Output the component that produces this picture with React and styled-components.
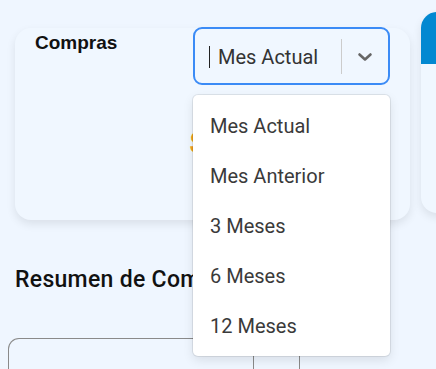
import React from 'react'
import styled, { createGlobalStyle } from 'styled-components'

const GlobalStyle = createGlobalStyle`
  html, body {
    margin:0;
    padding:0;
    overflow:hidden;
    background:#eff6ff;
    font-family:Roboto, "Liberation Sans", sans-serif;
  }
`

const options = ['Mes Actual', 'Mes Anterior', '3 Meses', '6 Meses', '12 Meses']

const ChevronDown = () => (
  <svg width="16" height="10" viewBox="0 0 16 10" fill="none">
    <polyline points="2.5,2.5 8,7.5 13.5,2.5" stroke="#666" strokeWidth="2.6" strokeLinecap="round" strokeLinejoin="round" />
  </svg>
)

const App = () => {
  return (
    <Page>
      <GlobalStyle />
      <CardRow>
        <StatCard>
          <CardHeader>
            <CardTitle>Compras</CardTitle>
            <SelectWrap>
              <SelectControl>
                <Caret />
                <SelectValue>Mes Actual</SelectValue>
                <Separator />
                <Indicator><ChevronDown /></Indicator>
              </SelectControl>
              <Menu>
                {options.map(o => <Option key={o}>{o}</Option>)}
              </Menu>
            </SelectWrap>
          </CardHeader>
          <Amount>$0.00</Amount>
        </StatCard>
        <SideCard>
          <CardBand />
        </SideCard>
      </CardRow>
      <SectionTitle>Resumen de Compras</SectionTitle>
      <TableBox>
        <Cell />
        <Cell narrow />
      </TableBox>
    </Page>
  )
}

const Page = styled.div`
  height:369px;
  padding-left:15px;
  box-sizing:border-box;
  overflow:hidden;
`

const CardRow = styled.div`
  display:flex;
  align-items:flex-start;
  gap:11px;
`

const StatCard = styled.div`
  flex:none;
  width:395px;
  height:192px;
  margin-top:28px;
  padding:0 20px;
  box-sizing:border-box;
  background:#f0f7ff;
  border-radius:16px;
  box-shadow:0 4px 10px rgba(0,0,0,0.09);
`

const SideCard = styled.div`
  flex:none;
  width:200px;
  height:201px;
  margin-top:12px;
  background:#f0f7ff;
  border-radius:16px;
  overflow:hidden;
  box-shadow:0 4px 10px rgba(0,0,0,0.09);
`

const CardBand = styled.div`
  height:52px;
  background:#0288d1;
`

const CardHeader = styled.div`
  display:flex;
  justify-content:space-between;
  align-items:flex-start;
`

const CardTitle = styled.div`
  margin-top:4px;
  font-family:"Liberation Sans", Arial, sans-serif;
  font-weight:700;
  font-size:19px;
  line-height:22px;
  color:#111;
`

const SelectWrap = styled.div`
  position:relative;
  margin-top:-1px;
  width:197px;
`

const SelectControl = styled.div`
  display:flex;
  align-items:center;
  height:58px;
  box-sizing:border-box;
  border:2px solid #3b8bf6;
  border-radius:9px;
  background:#f0f7ff;
  padding-left:14px;
`

const Caret = styled.span`
  width:1px;
  height:22px;
  background:#222;
  margin-right:8px;
  margin-top:1px;
`

const SelectValue = styled.span`
  flex:1;
  font-size:20px;
  color:#333;
  margin-top:2px;
`

const Separator = styled.span`
  width:1px;
  height:35px;
  background:#ccc;
`

const Indicator = styled.span`
  width:46px;
  display:flex;
  justify-content:center;
  align-items:center;
  margin-top:2px;
`

const Menu = styled.div`
  position:absolute;
  top:68px;
  left:0;
  width:197px;
  padding:6px 0 5px;
  background:#fff;
  border-radius:5px;
  box-shadow:0 0 0 1px rgba(0,0,0,0.08), 0 4px 11px rgba(0,0,0,0.1);
  z-index:10;
`

const Option = styled.div`
  height:50px;
  display:flex;
  align-items:center;
  padding-left:17px;
  font-size:20px;
  color:#3a3a3a;
`

const Amount = styled.div`
  margin-top:40px;
  padding-left:154px;
  font-size:30px;
  font-weight:700;
  color:#f5a01e;
`

const SectionTitle = styled.h2`
  margin:47px 0 0;
  font-size:23px;
  font-weight:500;
  letter-spacing:0.3px;
  line-height:26px;
  color:#111;
  white-space:nowrap;
`

const TableBox = styled.div`
  display:flex;
  margin-top:45px;
  margin-left:-7px;
  width:290px;
  height:40px;
  border:1px solid #8a8a8a;
  border-bottom:none;
  border-radius:11px 11px 0 0;
`

const Cell = styled.div`
  flex:${p => (p.narrow ? 'none' : '1')};
  width:${p => (p.narrow ? '45px' : 'auto')};
  border-right:${p => (p.narrow ? 'none' : '1px solid #8a8a8a')};
`

export default App
